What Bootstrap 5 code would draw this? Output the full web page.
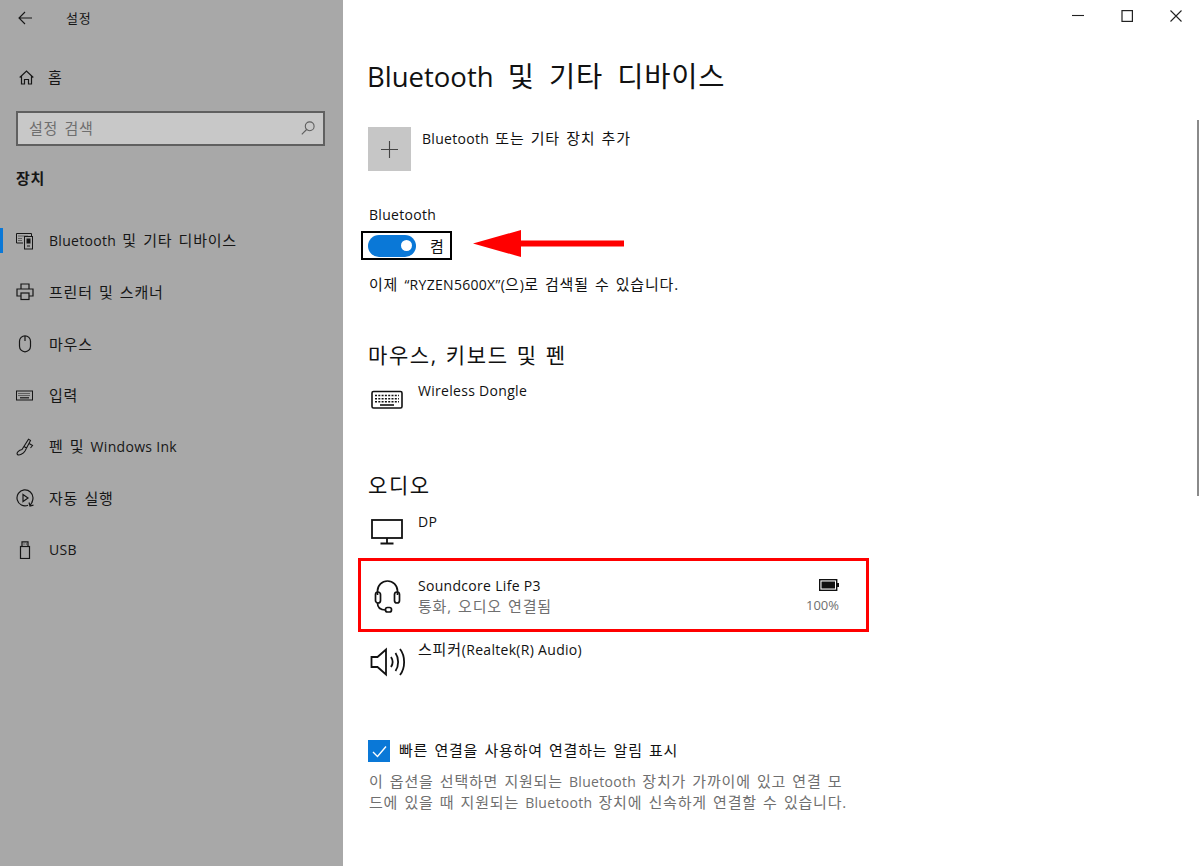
<!DOCTYPE html>
<html lang="ko">
<head>
<meta charset="utf-8">
<title>설정</title>
<link href="https://cdn.jsdelivr.net/npm/bootstrap@5.3.0/dist/css/bootstrap.min.css" rel="stylesheet">
<style>
html,body{height:866px;overflow:hidden}
body{font-family:"Open Sans","Noto Sans CJK KR",sans-serif;font-size:15px;letter-spacing:.8px;word-spacing:1.5px;color:#111;background:#fff;line-height:20px}
svg{display:block;flex:none}
.lat{font-size:14px;letter-spacing:.3px;word-spacing:0}
.side-pane{width:343px;height:866px;background:#a8a8a8;color:#161616;flex:none}
.top-line{height:36px;padding:0 0 0 18px;margin-bottom:21px}
.top-title{font-size:13px;margin-left:33px}
.home-line{height:40px;padding-left:19px;margin-bottom:14px}
.nav-text{margin-left:14px;white-space:nowrap}
.search-box{width:309px;height:35px;margin-left:16px;border:2px solid #606060;background:#c8c8c8;color:#6e6e6e;padding:0 8px 2px 11px}
.section-name{font-weight:700;margin:22px 0 0 16px;height:20px;line-height:20px}
.side-list{margin-top:27px}
.side-row{height:51.5px;padding-left:16px;position:relative}
.side-row .nav-text{margin-left:15px}
.side-mark{position:absolute;left:0;top:13px;width:3px;height:25px;background:#0a78d7}
.main-pane{min-width:0;position:relative;height:866px;padding-left:24px}
.win-btns{height:32px;justify-content:flex-end;gap:37px;padding-right:18px;margin-left:-24px}
.page-title{font-size:28.5px;font-weight:400;line-height:40px;margin:24px 0 30px;letter-spacing:.8px;word-spacing:6px;color:#111}
.page-title .lat{font-size:27.5px;letter-spacing:0}
.add-row{height:44px}
.add-tile{width:43px;height:44px;background:#c6c6c6;margin-left:1px}
.add-text{margin:0 0 0 11px;line-height:22px}
.bt-label{margin:33px 0 0 2px;line-height:20px;height:20px}
.toggle-box{width:91px;height:29px;border:2px solid #000;margin:7px 0 0 -6px;padding-left:5px}
.toggle-track{width:48px;height:22px;border-radius:11px;background:#0a78d7;padding-right:4px;justify-content:flex-end}
.toggle-knob{width:11px;height:11px;border-radius:50%;background:#fff}
.toggle-text{margin-left:14px}
.found-line{margin:13px 0 0 2px;height:22px;line-height:22px}
.group-name{font-size:21px;line-height:30px;height:30px;font-weight:400;margin:0 0 0 1px;letter-spacing:1.6px;word-spacing:1px;color:#111}
.gap-first{margin-top:45px}
.gap-second{margin-top:50px}
.dev-row{padding-left:4px;height:40px;width:472px}
.row-first{margin-top:10px}
.row-dp{margin-top:11px}
.row-sound{margin-top:11px;height:68px}
.row-speaker{margin-top:9px}
.dev-name{margin-left:14px;line-height:20px}
.dev-name-two{line-height:21px}
.dev-icon{width:33px;flex:none}
.icon-low{margin-top:10px}
.icon-dp{margin-top:8px}
.icon-head{margin-left:3px}
.icon-speaker{margin:7px 0 0 -1px}
.dim-text{color:#6f6f6f}
.red-frame{position:absolute;left:15px;top:558px;width:511px;height:74px;border:3px solid #f00;pointer-events:none}
.batt-col{line-height:16px;text-align:right}
.batt-col .lat{font-size:13px;letter-spacing:0}
.batt-gap{margin-bottom:6px}
.check-line{margin:61px 0 0 1px;height:22px}
.check-tile{width:22px;height:22px;background:#0a78d7}
.check-text{margin:-2px 0 0 9px}
.help-text{width:500px;margin:9px 0 0 2px;line-height:21px;color:#6f6f6f;white-space:nowrap}
.scroll-thumb{position:absolute;right:1px;top:120px;width:2px;height:376px;background:#8a8a8a}
.red-arrow{position:absolute;left:130px;top:230px}
</style>
</head>
<body class="d-flex">
<aside class="side-pane d-flex flex-column">
  <div class="top-line d-flex align-items-center">
    <svg width="15" height="14" viewBox="0 0 15 14" fill="none" stroke="#161616" stroke-width="1.1"><path d="M14 7H1M7 1L1 7l6 6"/></svg>
    <span class="top-title">설정</span>
  </div>
  <div class="home-line d-flex align-items-center">
    <svg width="15" height="15" viewBox="0 0 15 15" fill="none" stroke="#161616" stroke-width="1.2"><path d="M.7 7.5L7.5 1l6.8 6.5M2.5 6v8h3V9.500h4V14h3V6"/></svg>
    <span class="nav-text">홈</span>
  </div>
  <div class="search-box d-flex align-items-center justify-content-between">
    <span>설정 검색</span>
    <svg width="14" height="14" viewBox="0 0 14 14" fill="none" stroke="#5e5e5e" stroke-width="1.1"><circle cx="8.7" cy="5.3" r="4.4"/><path d="M5.6 8.5L.8 13.3"/></svg>
  </div>
  <div class="section-name">장치</div>
  <nav class="side-list">
    <div class="side-row d-flex align-items-center">
      <span class="side-mark"></span>
      <svg width="18" height="18" viewBox="0 0 18 18" fill="none" stroke="#161616" stroke-width="1"><path d="M7 11H.5V1.500h15V4"/><path d="M2.500 4h9M2.500 6.500h4M2.500 8.500h4" stroke-dasharray="1 1"/><rect x="8.500" y="4.500" width="8" height="12.500"/><rect x="11" y="7" width="3" height="4" fill="#161616"/><path d="M11 14h3"/></svg>
      <span class="nav-text"><span class="lat">Bluetooth</span> 및 기타 디바이스</span>
    </div>
    <div class="side-row d-flex align-items-center">
      <svg width="18" height="18" viewBox="0 0 18 18" fill="none" stroke="#161616" stroke-width="1.2"><path d="M5 6V1h8v5M5 13H1V6h16v7h-4"/><rect x="5" y="10" width="8" height="6.500"/></svg>
      <span class="nav-text">프린터 및 스캐너</span>
    </div>
    <div class="side-row d-flex align-items-center">
      <svg width="18" height="18" viewBox="0 0 18 18" fill="none" stroke="#161616" stroke-width="1.2"><rect x="3.500" y=".8" width="11" height="16" rx="5.500"/><path d="M9 1v5"/></svg>
      <span class="nav-text">마우스</span>
    </div>
    <div class="side-row d-flex align-items-center">
      <svg width="18" height="18" viewBox="0 0 18 18" fill="none" stroke="#161616" stroke-width="1"><rect x=".5" y="5" width="16" height="9"/><path d="M2.500 7.500h12M2.500 9.500h12" stroke-dasharray="1 1"/><path d="M4 11.800h9" stroke-width="1.2"/></svg>
      <span class="nav-text">입력</span>
    </div>
    <div class="side-row d-flex align-items-center">
      <svg width="18" height="18" viewBox="0 0 18 18" fill="none" stroke="#161616" stroke-width="1.1"><path d="M6 11.500L12.500 1.200l2 1.200L9 13c-1.500 2.500-6 5-7.500 3.500S3 12 6 11.500zM13 5.500l3.500 2-2 2.500M8 8.500l2.800 1.800"/></svg>
      <span class="nav-text">펜 및 <span class="lat">Windows Ink</span></span>
    </div>
    <div class="side-row d-flex align-items-center">
      <svg width="18" height="18" viewBox="0 0 18 18" fill="none" stroke="#161616" stroke-width="1.2"><path d="M12 16.300A8 8 0 1 1 17 9c0 1.500-.4 2.800-1 4"/><path d="M7 5.500L12 9l-5 3.500zM16.500 12.500L13.800 17M13 13.500l1 3.500 3.500-.8"/></svg>
      <span class="nav-text">자동 실행</span>
    </div>
    <div class="side-row d-flex align-items-center">
      <svg width="18" height="18" viewBox="0 0 18 18" fill="none" stroke="#161616" stroke-width="1.2"><rect x="4.500" y="5.500" width="9" height="12"/><path d="M6 5.500V.8h6v4.700M7.500 3h1M9.800 3h1"/></svg>
      <span class="nav-text"><span class="lat">USB</span></span>
    </div>
  </nav>
</aside>
<main class="main-pane flex-grow-1">
  <div class="win-btns d-flex align-items-center">
    <svg width="12" height="12" viewBox="0 0 12 12" stroke="#222" stroke-width="1.1"><path d="M0 5.500h12"/></svg>
    <svg width="12" height="12" viewBox="0 0 12 12" fill="none" stroke="#222" stroke-width="1.200"><rect x="1" y=".6" width="10.400" height="10.800"/></svg>
    <svg width="12" height="12" viewBox="0 0 12 12" stroke="#222" stroke-width="1.100"><path d="M.5.500l11 11M11.500.500l-11 11"/></svg>
  </div>
  <h1 class="page-title"><span class="lat">Bluetooth</span> 및 기타 디바이스</h1>
  <div class="add-row d-flex">
    <div class="add-tile d-flex align-items-center justify-content-center">
      <svg width="17" height="17" viewBox="0 0 17 17" stroke="#444" stroke-width="1.100"><path d="M8.500 0v17M0 8.500h17"/></svg>
    </div>
    <span class="add-text"><span class="lat">Bluetooth</span> 또는 기타 장치 추가</span>
  </div>
  <div class="bt-label"><span class="lat">Bluetooth</span></div>
  <div class="toggle-box d-flex align-items-center">
    <div class="toggle-track d-flex align-items-center"><span class="toggle-knob"></span></div>
    <span class="toggle-text">켬</span>
  </div>
  <div class="found-line">이제 <span class="lat">“RYZEN5600X”(</span>으<span class="lat">)</span>로 검색될 수 있습니다.</div>
  <h2 class="group-name gap-first">마우스, 키보드 및 펜</h2>
  <div class="dev-row row-first d-flex">
    <span class="dev-icon"><svg class="icon-low" width="32" height="20" viewBox="0 0 32 20" fill="none" stroke="#111" stroke-width="1.600"><rect x="1" y="1.500" width="30" height="16.500" rx="1.500"/><path d="M4 5.500h24M4 8.700h24M4 11.700h24" stroke-dasharray="2 1.300" stroke-width="1.500"/><path d="M9 15h14"/></svg></span>
    <span class="dev-name"><span class="lat">Wireless Dongle</span></span>
  </div>
  <h2 class="group-name gap-second">오디오</h2>
  <div class="dev-row row-dp d-flex">
    <span class="dev-icon"><svg class="icon-dp" width="32" height="26" viewBox="0 0 32 26" fill="none" stroke="#111" stroke-width="1.800"><rect x="1" y="1" width="30" height="18"/><path d="M16 19v5M9.500 24.500h13"/></svg></span>
    <span class="dev-name"><span class="lat">DP</span></span>
  </div>
  <div class="dev-row row-sound d-flex align-items-center">
    <span class="dev-icon"><svg class="icon-head" width="27" height="36" viewBox="0 0 26 36" fill="none" stroke="#111" stroke-width="1.700"><path d="M3 17V13a10 10 0 0 1 20 0v4"/><rect x="1" y="14" width="5" height="11" rx="2.500"/><rect x="20" y="14" width="5" height="11" rx="2.500"/><path d="M3 25c0 5 3 7 8 7"/><rect x="11" y="29.500" width="6" height="4.500" rx="2"/></svg></span>
    <div class="dev-name dev-name-two">
      <div><span class="lat">Soundcore Life P3</span></div>
      <div class="dim-text">통화, 오디오 연결됨</div>
    </div>
    <div class="batt-col ms-auto dim-text d-flex flex-column align-items-end">
      <svg class="batt-gap" width="20" height="12" viewBox="0 0 20 12"><rect x=".7" y=".7" width="17" height="10.600" fill="none" stroke="#111" stroke-width="1.400"/><rect x="2.500" y="2.500" width="13.500" height="7" fill="#111"/><rect x="18" y="4" width="2" height="4" fill="#111"/></svg>
      <span class="lat">100%</span>
    </div>
  </div>
  <div class="dev-row row-speaker d-flex">
    <span class="dev-icon"><svg class="icon-speaker" width="36" height="32" viewBox="0 0 36 32" fill="none" stroke="#111" stroke-width="1.800"><path d="M1.500 11h6L16 3.500v25L7.500 21h-6zM21 11c2 3 2 7 0 10M25.500 7c3.500 5 3.500 13 0 18M30 3c5.500 7 5.500 19 0 26"/></svg></span>
    <span class="dev-name">스피커<span class="lat">(Realtek(R) Audio)</span></span>
  </div>
  <div class="check-line d-flex align-items-center">
    <div class="check-tile d-flex align-items-center justify-content-center">
      <svg width="15" height="13" viewBox="0 0 15 13" fill="none" stroke="#fff" stroke-width="1.400"><path d="M1 7l4.500 4.500L14 1.500"/></svg>
    </div>
    <span class="check-text">빠른 연결을 사용하여 연결하는 알림 표시</span>
  </div>
  <p class="help-text">이 옵션을 선택하면 지원되는 <span class="lat">Bluetooth</span> 장치가 가까이에 있고 연결 모<br>드에 있을 때 지원되는 <span class="lat">Bluetooth</span> 장치에 신속하게 연결할 수 있습니다.</p>
  <div class="red-frame"></div>
  <svg class="red-arrow" width="151" height="27" viewBox="0 0 151 27"><path d="M0 13.500L48 0v10.500h103v6H48V27z" fill="#f00"/></svg>
  <div class="scroll-thumb"></div>
</main>
</body>
</html>
